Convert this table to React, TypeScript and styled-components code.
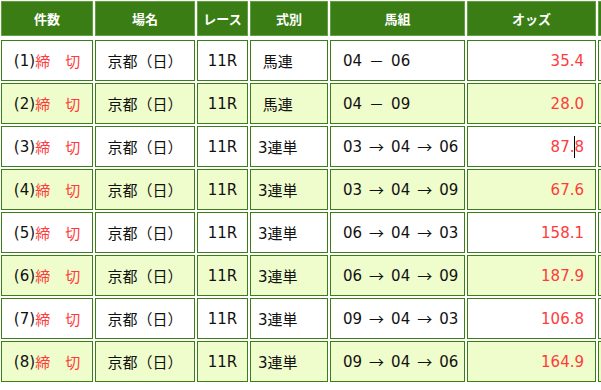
import React from "react";
import styled, { createGlobalStyle } from "styled-components";

type Align = "left" | "center" | "right";

interface Bet {
    no: number;
    place: string;
    race: string;
    kind: string;
    combo: string[];
    arrow: boolean;
    odds: string;
}

const COLS = [92, 100, 51, 78, 135, 129, 60];

const bets: Bet[] = [
    { no: 1, place: "京都（日）", race: "11R", kind: "\u00a0馬連", combo: ["04", "06"], arrow: false, odds: "35.4" },
    { no: 2, place: "京都（日）", race: "11R", kind: "\u00a0馬連", combo: ["04", "09"], arrow: false, odds: "28.0" },
    { no: 3, place: "京都（日）", race: "11R", kind: "3連単", combo: ["03", "04", "06"], arrow: true, odds: "87.8" },
    { no: 4, place: "京都（日）", race: "11R", kind: "3連単", combo: ["03", "04", "09"], arrow: true, odds: "67.6" },
    { no: 5, place: "京都（日）", race: "11R", kind: "3連単", combo: ["06", "04", "03"], arrow: true, odds: "158.1" },
    { no: 6, place: "京都（日）", race: "11R", kind: "3連単", combo: ["06", "04", "09"], arrow: true, odds: "187.9" },
    { no: 7, place: "京都（日）", race: "11R", kind: "3連単", combo: ["09", "04", "03"], arrow: true, odds: "106.8" },
    { no: 8, place: "京都（日）", race: "11R", kind: "3連単", combo: ["09", "04", "06"], arrow: true, odds: "164.9" },
];

const headers = ["件数", "場名", "レース", "式別", "馬組", "オッズ", ""];

const App: React.FC = () => {
    return (
        <>
            <GlobalStyle />
            <Table>
                <HeadRow>
                    {headers.map((h, i) => (
                        <HeadCell key={i} w={COLS[i]}>{h}</HeadCell>
                    ))}
                </HeadRow>
                {bets.map((b, idx) => (
                    <Row key={b.no}>
                        <Cell w={COLS[0]} alt={idx % 2 === 1} align="center">
                            ({b.no})<Red>締　切</Red>
                        </Cell>
                        <Cell w={COLS[1]} alt={idx % 2 === 1} align="center">{b.place}</Cell>
                        <Cell w={COLS[2]} alt={idx % 2 === 1} align="center">{b.race}</Cell>
                        <Cell w={COLS[3]} alt={idx % 2 === 1} align="left" pad={7}>{b.kind}</Cell>
                        <Cell w={COLS[4]} alt={idx % 2 === 1} align="left" pad={12}>
                            {b.combo.map((c, i) => (
                                <React.Fragment key={i}>
                                    {i > 0 ? <Sep>{b.arrow ? "→" : "－"}</Sep> : null}
                                    {c}
                                </React.Fragment>
                            ))}
                        </Cell>
                        <Cell w={COLS[5]} alt={idx % 2 === 1} align="right" pad={11}>
                            <Red>
                                {b.no === 3 ? <>87.<Caret />8</> : b.odds}
                            </Red>
                        </Cell>
                        <Cell w={COLS[6]} alt={idx % 2 === 1} align="left" />
                    </Row>
                ))}
            </Table>
        </>
    );
};

const GlobalStyle = createGlobalStyle`
    body{
        margin: 0;
        background: #ffffff;
        font-family: "DejaVu Sans", "Noto Sans CJK JP", sans-serif;
        overflow: hidden;
    }
`;

const Table = styled.div`
    display: flex;
    flex-direction: column;
    gap: 2px;
    padding: 1px 0 0 1px;
    width: max-content;
`;

const HeadRow = styled.div`
    display: flex;
    gap: 2px;
    margin-bottom: 2px;
`;

const Row = styled.div`
    display: flex;
    gap: 2px;
`;

const HeadCell = styled.div<{ w: number }>`
    box-sizing: border-box;
    width: ${({ w }) => w}px;
    height: 35px;
    flex-shrink: 0;
    display: flex;
    align-items: center;
    justify-content: center;
    background: #3a7d14;
    border: 1px solid #62a040;
    color: #ffffff;
    font-family: "Noto Sans CJK JP", sans-serif;
    font-weight: bold;
    font-size: 13px;
`;

const Cell = styled.div<{ w: number; alt: boolean; align: Align; pad?: number }>`
    box-sizing: border-box;
    width: ${({ w }) => w}px;
    height: 41px;
    flex-shrink: 0;
    display: flex;
    align-items: center;
    justify-content: ${({ align }) => (align === "left" ? "flex-start" : align === "right" ? "flex-end" : "center")};
    padding: 0 ${({ align, pad }) => (align === "right" ? pad ?? 0 : 0)}px 0 ${({ align, pad }) => (align === "left" ? pad ?? 0 : 0)}px;
    background: ${({ alt }) => (alt ? "#effccb" : "#ffffff")};
    border: 1px solid #3b7d17;
    color: #111111;
    font-size: 15px;
    white-space: pre;
`;

const Red = styled.span`
    color: #ff3b3b;
`;

const Sep = styled.span`
    font-family: "Noto Sans CJK JP", sans-serif;
    margin: 0 7px;
`;

const Caret = styled.span`
    display: inline-block;
    width: 1px;
    height: 22px;
    margin-right: -1px;
    background: #000000;
    vertical-align: middle;
`;

export default App;
